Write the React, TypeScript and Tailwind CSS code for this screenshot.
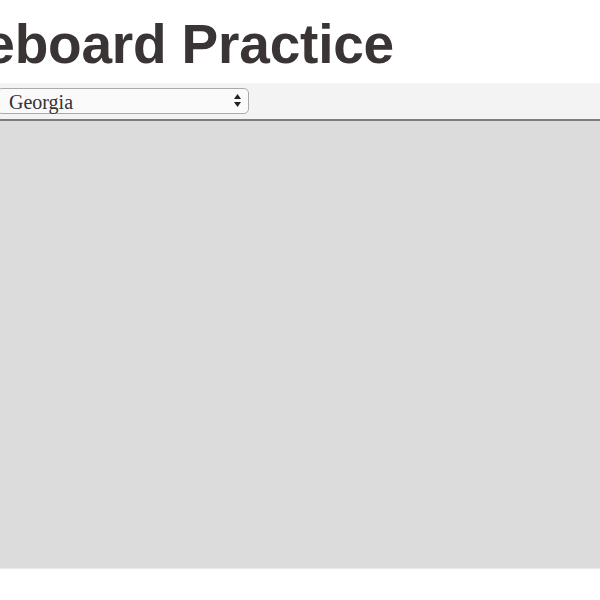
export default function App() {
  return (
    <div className="w-[600px] h-[600px] overflow-hidden bg-white">
      <div className="h-[83px] flex items-start">
        <h1
          className="-ml-[134px] mt-[12px] whitespace-nowrap text-[55px] leading-[64px] font-bold tracking-[-0.2px] text-[#3a3435]"
          style={{ fontFamily: '"Liberation Sans", Arial, sans-serif' }}
        >
          Whiteboard Practice
        </h1>
      </div>

      <div className="h-[38px] bg-[#f3f3f3] border-b-2 border-[#7d7d7d] flex items-center">
        <div className="relative -ml-[3px] w-[252px] h-[26px] rounded-[5px] border border-[#ababab] bg-[#fafafa] flex items-center">
          <span
            className="pl-[11px] pt-[1px] text-[20px] leading-none text-[#333]"
            style={{ fontFamily: '"Liberation Serif", Georgia, serif' }}
          >
            Georgia
          </span>
          <svg className="absolute right-[7px] top-[5px]" width="7" height="13" viewBox="0 0 7 13">
            <path d="M3.5 0 L7 5 H0 Z" fill="#222" />
            <path d="M0 8 H7 L3.5 13 Z" fill="#222" />
          </svg>
        </div>
      </div>

      <div className="h-[448px] bg-[#dcdcdc] border-b border-[#e9e9e9]" />
    </div>
  );
}
